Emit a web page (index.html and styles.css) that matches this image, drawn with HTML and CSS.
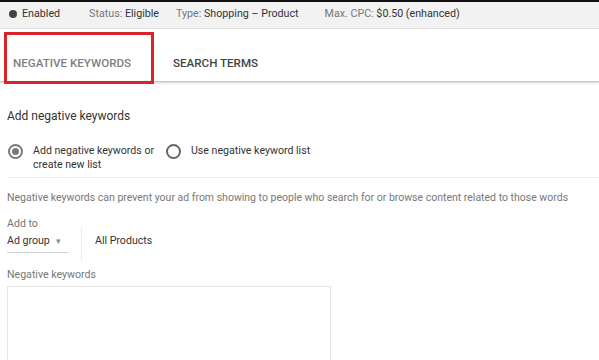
FILE: index.html
```html
<!DOCTYPE html>
<html lang="en">
<head>
  <meta charset="UTF-8" />
  <title>Negative keywords</title>
  <link rel="stylesheet" href="styles.css">
</head>
<body>
  <div class="status-bar">
    <span class="stat stat-enabled"><span class="dot"></span>Enabled</span>
    <span class="stat stat-status"><span class="label">Status:</span> Eligible</span>
    <span class="stat stat-type"><span class="label">Type:</span> Shopping – Product</span>
    <span class="stat stat-cpc"><span class="label">Max. CPC:</span> $0.50 (enhanced)</span>
  </div>

  <div class="tabs">
    <div class="tab tab-active">NEGATIVE KEYWORDS</div>
    <div class="tab">SEARCH TERMS</div>
    <div class="highlight"></div>
  </div>

  <div class="panel">
    <div class="panel-title">Add negative keywords</div>

    <div class="options">
      <label class="option option-first">
        <span class="radio radio-on"></span>
        <span class="option-text">Add negative keywords or<br>create new list</span>
      </label>
      <label class="option">
        <span class="radio"></span>
        <span class="option-text">Use negative keyword list</span>
      </label>
    </div>

    <div class="hint">Negative keywords can prevent your ad from showing to people who search for or browse content related to those words</div>

    <div class="add-to">
      <div class="field-label">Add to</div>
      <div class="add-row">
        <div class="select">Ad group <span class="caret">&#9662;</span></div>
        <div class="sep"></div>
        <div class="target">All Products</div>
      </div>
    </div>

    <div class="field-label kw-label">Negative keywords</div>
    <div class="kw-box"></div>
  </div>
</body>
</html>
```

FILE: styles.css
```css
body {
    margin: 0;
    font-family: Roboto, "Liberation Sans", Arial, sans-serif;
    background: #fff;
    color: #333;
    overflow: hidden;
}
.status-bar {
    display: flex;
    align-items: center;
    height: 23px;
    padding: 0 0 3px 9px;
    background: #f2f2f2;
    border-top: 2px solid #111;
    border-bottom: 1px solid #e2e2e2;
    font-size: 10.7px;
    color: #333;
}
.stat .label {
    color: #777;
}
.stat-enabled {
    display: flex;
    align-items: center;
}
.dot {
    width: 8px;
    height: 8px;
    border-radius: 50%;
    background: #444;
    margin-right: 5px;
}
.stat-status {
    margin-left: 29px;
}
.stat-type {
    margin-left: 17px;
}
.stat-cpc {
    margin-left: 26px;
}
.tabs {
    position: relative;
    display: flex;
    align-items: flex-end;
    height: 52px;
    padding-left: 13px;
    border-bottom: 1px solid #c8c8c8;
    box-shadow: 0 1px 2px rgba(0, 0, 0, 0.18);
}
.tab {
    font-size: 11.6px;
    font-weight: 500;
    color: #444;
    padding-bottom: 11px;
    margin-right: 42px;
}
.tab-active {
    color: #808080;
}
.highlight {
    position: absolute;
    left: 4px;
    top: 3px;
    width: 144px;
    height: 46px;
    border: 3px solid #d8232a;
}
.panel {
    padding: 0 7px;
}
.panel-title {
    font-size: 12px;
    color: #333;
    margin-top: 26px;
    line-height: 16px;
}
.options {
    display: flex;
    margin-top: 20px;
    padding-bottom: 5px;
    border-bottom: 1px solid #ebebeb;
    margin-right: -7px;
}
.option {
    display: flex;
    align-items: flex-start;
    font-size: 10.6px;
    line-height: 14px;
    color: #333;
}
.option-first {
    width: 158px;
}
.radio {
    box-sizing: border-box;
    width: 15px;
    height: 15px;
    border-radius: 50%;
    border: 2px solid #666;
    margin: 0 10px 0 1px;
    position: relative;
}
.radio-on {
    border-color: #7a7a7a;
}
.radio-on::after {
    content: "";
    position: absolute;
    left: 2px;
    top: 2px;
    width: 7px;
    height: 7px;
    border-radius: 50%;
    background: #7a7a7a;
}
.hint {
    font-size: 10.5px;
    color: #777;
    margin-top: 13px;
    line-height: 14px;
    white-space: nowrap;
}
.add-to {
    margin-top: 12px;
}
.field-label {
    font-size: 10.6px;
    color: #777;
    line-height: 14px;
}
.add-row {
    display: flex;
    align-items: stretch;
    height: 30px;
}
.select {
    width: 61px;
    font-size: 10.6px;
    color: #333;
    padding-top: 3px;
    border-bottom: 1px solid #d0d0d0;
    height: 18px;
}
.caret {
    font-size: 9px;
    color: #888;
    margin-left: 4px;
}
.sep {
    width: 1px;
    background: #ececec;
    margin-left: 13px;
    margin-top: -4px;
}
.target {
    font-size: 10.6px;
    color: #333;
    padding-top: 3px;
    margin-left: 13px;
}
.kw-label {
    margin-top: 7px;
}
.kw-box {
    width: 322px;
    height: 90px;
    margin-top: 4px;
    border: 1px solid #e4e4e4;
}
```
